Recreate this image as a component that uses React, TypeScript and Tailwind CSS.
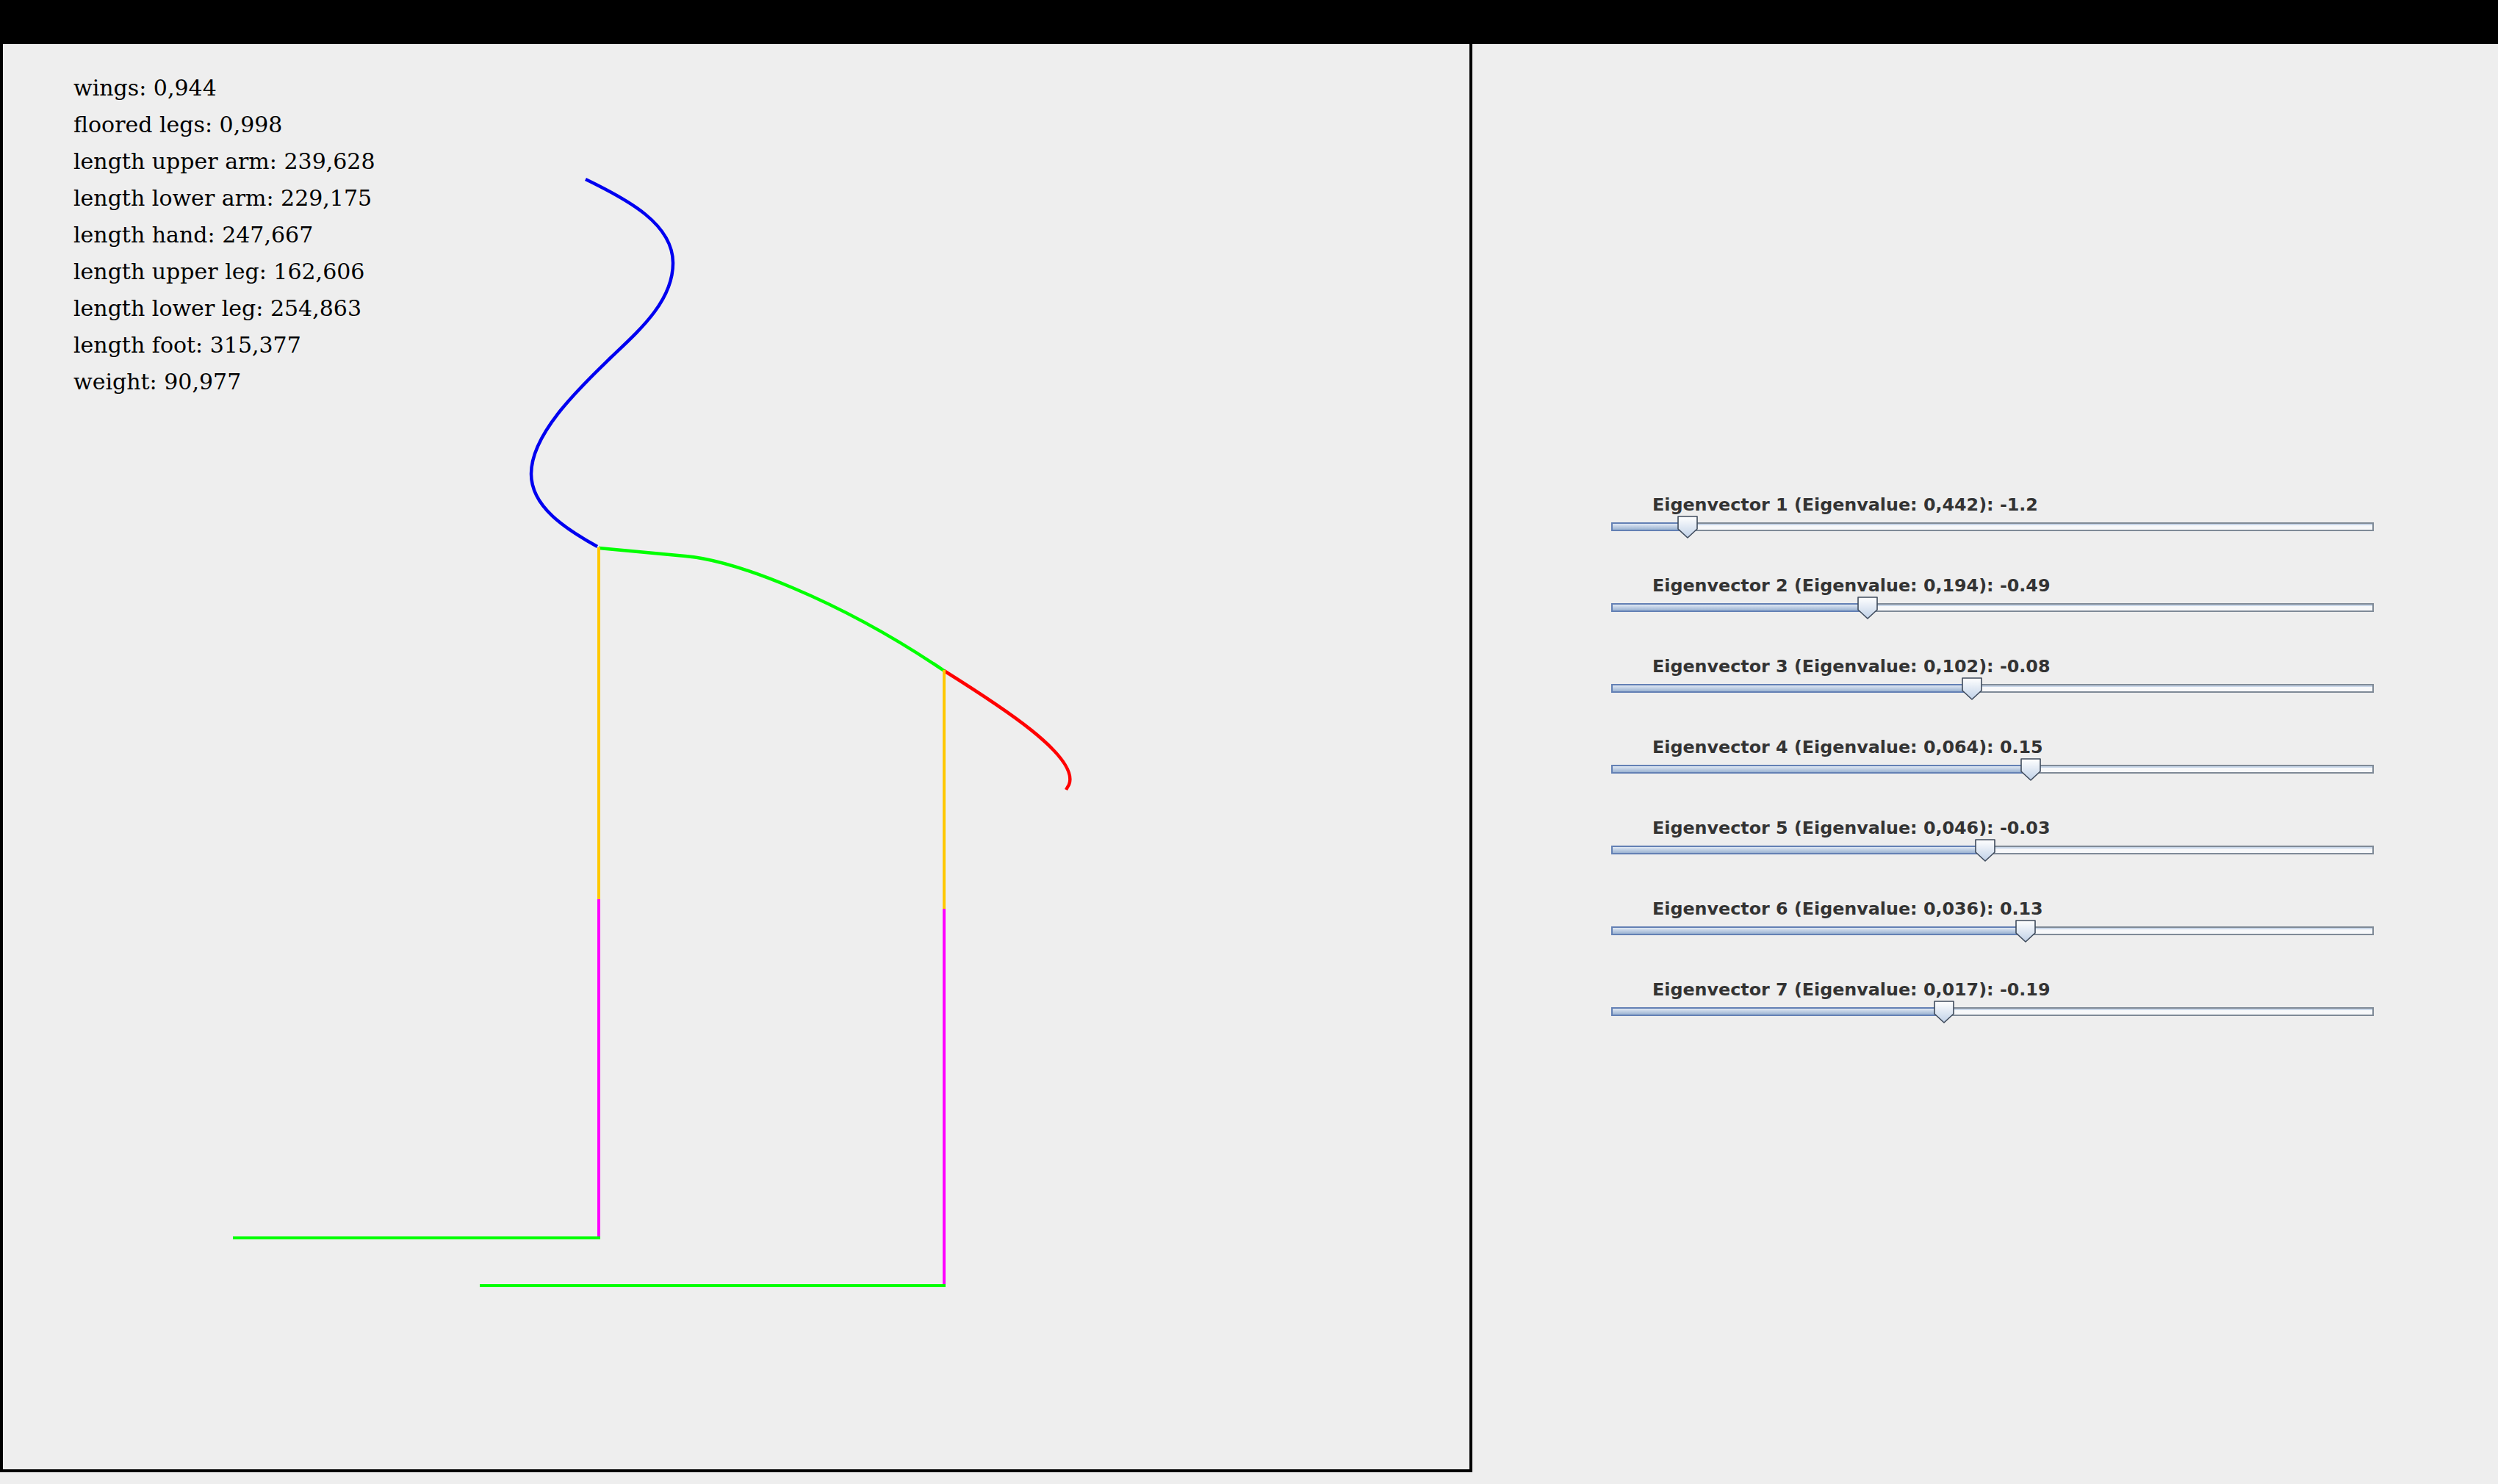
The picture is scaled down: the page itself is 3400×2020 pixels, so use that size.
import React from "react";

const stats = [
  "wings: 0,944",
  "floored legs: 0,998",
  "length upper arm: 239,628",
  "length lower arm: 229,175",
  "length hand: 247,667",
  "length upper leg: 162,606",
  "length lower leg: 254,863",
  "length foot: 315,377",
  "weight: 90,977",
];

const sliders = [
  { n: 1, ev: "0,442", v: -1.2 },
  { n: 2, ev: "0,194", v: -0.49 },
  { n: 3, ev: "0,102", v: -0.08 },
  { n: 4, ev: "0,064", v: 0.15 },
  { n: 5, ev: "0,046", v: -0.03 },
  { n: 6, ev: "0,036", v: 0.13 },
  { n: 7, ev: "0,017", v: -0.19 },
];

// track is 1038px wide, zero sits at 519, one unit = 346px
const thumbX = (v: number) => Math.round(519 + v * 346);

const Thumb = () => (
  <svg width="28" height="31" viewBox="0 0 28 31">
    <defs>
      <linearGradient id="thumbFill" x1="0" y1="0" x2="0" y2="1">
        <stop offset="0" stopColor="#ffffff" />
        <stop offset="1" stopColor="#c0d1e7" />
      </linearGradient>
    </defs>
    <path d="M1 1 H27 V18 L14 30 L1 18 Z" fill="url(#thumbFill)" stroke="#3f4b5c" strokeWidth="1.6" strokeLinejoin="round" />
  </svg>
);

const Slider = ({ n, ev, v }: { n: number; ev: string; v: number }) => {
  const x = thumbX(v);
  return (
    <div className="flex h-[110px] flex-col">
      <div className="mt-[1px] ml-[56px] font-['DejaVu_Sans',sans-serif] text-[23.8px] leading-[27px] font-bold text-[#333333]">
        Eigenvector {n} (Eigenvalue: {ev}): {v}
      </div>
      <div className="relative mt-[10px] h-[12px] w-[1038px] border-2 border-[#7f8a97] bg-linear-to-b from-[#c9d7e9] from-30% to-[#f7f8fa] to-30%">
        <div
          className="absolute -top-[2px] -bottom-[2px] -left-[2px] border-2 border-[#6380b4] bg-linear-to-b from-[#e0e8f3] to-[#9bb3d2]"
          style={{ width: x }}
        />
        <div className="absolute -top-[11px]" style={{ left: x - 16 }}>
          <Thumb />
        </div>
      </div>
    </div>
  );
};

const Figure = () => (
  <svg className="absolute inset-0" width="1996" height="1940" viewBox="4 60 1996 1940">
    <g fill="none" strokeWidth="4.5" strokeLinecap="butt" strokeLinejoin="round">
      <path
        d="M797 244 C855 272 916 305 916 358 C916 410 870 450 830 488 C790 527 723 590 723 645 C723 690 770 720 813 744"
        stroke="#0000f0"
      />
      <path d="M815 746 L933 757 C1000 763 1140 815 1285 913" stroke="#00ff00" />
      <path d="M1285 913 C1360 960 1470 1030 1455 1068 L1451 1075" stroke="#ff0000" />
    </g>
    <g fill="none" strokeWidth="4" strokeLinecap="butt">
      <path d="M815 745 V1224" stroke="#ffc800" />
      <path d="M815 1224 V1685" stroke="#ff00ff" />
      <path d="M317 1685 H817" stroke="#00ff00" />
      <path d="M1285 912 V1237" stroke="#ffc800" />
      <path d="M1285 1237 V1750" stroke="#ff00ff" />
      <path d="M653 1750 H1287" stroke="#00ff00" />
    </g>
  </svg>
);

export default function App() {
  return (
    <div className="flex h-[2020px] w-[3400px] flex-col overflow-hidden bg-[#eeeeee]">
      <div className="h-[60px] w-full bg-black" />
      <div className="flex">
        <div className="relative h-[1944px] w-[2004px] border-x-4 border-b-4 border-black">
          <Figure />
          <div className="relative pt-[35px] pl-[96px] font-['DejaVu_Serif',serif] text-[30px] leading-[50px] text-black">
            {stats.map((s) => (
              <div key={s}>{s}</div>
            ))}
          </div>
        </div>
        <div className="flex-1 pt-[613px] pl-[189px]">
          {sliders.map((s) => (
            <Slider key={s.n} {...s} />
          ))}
        </div>
      </div>
    </div>
  );
}
